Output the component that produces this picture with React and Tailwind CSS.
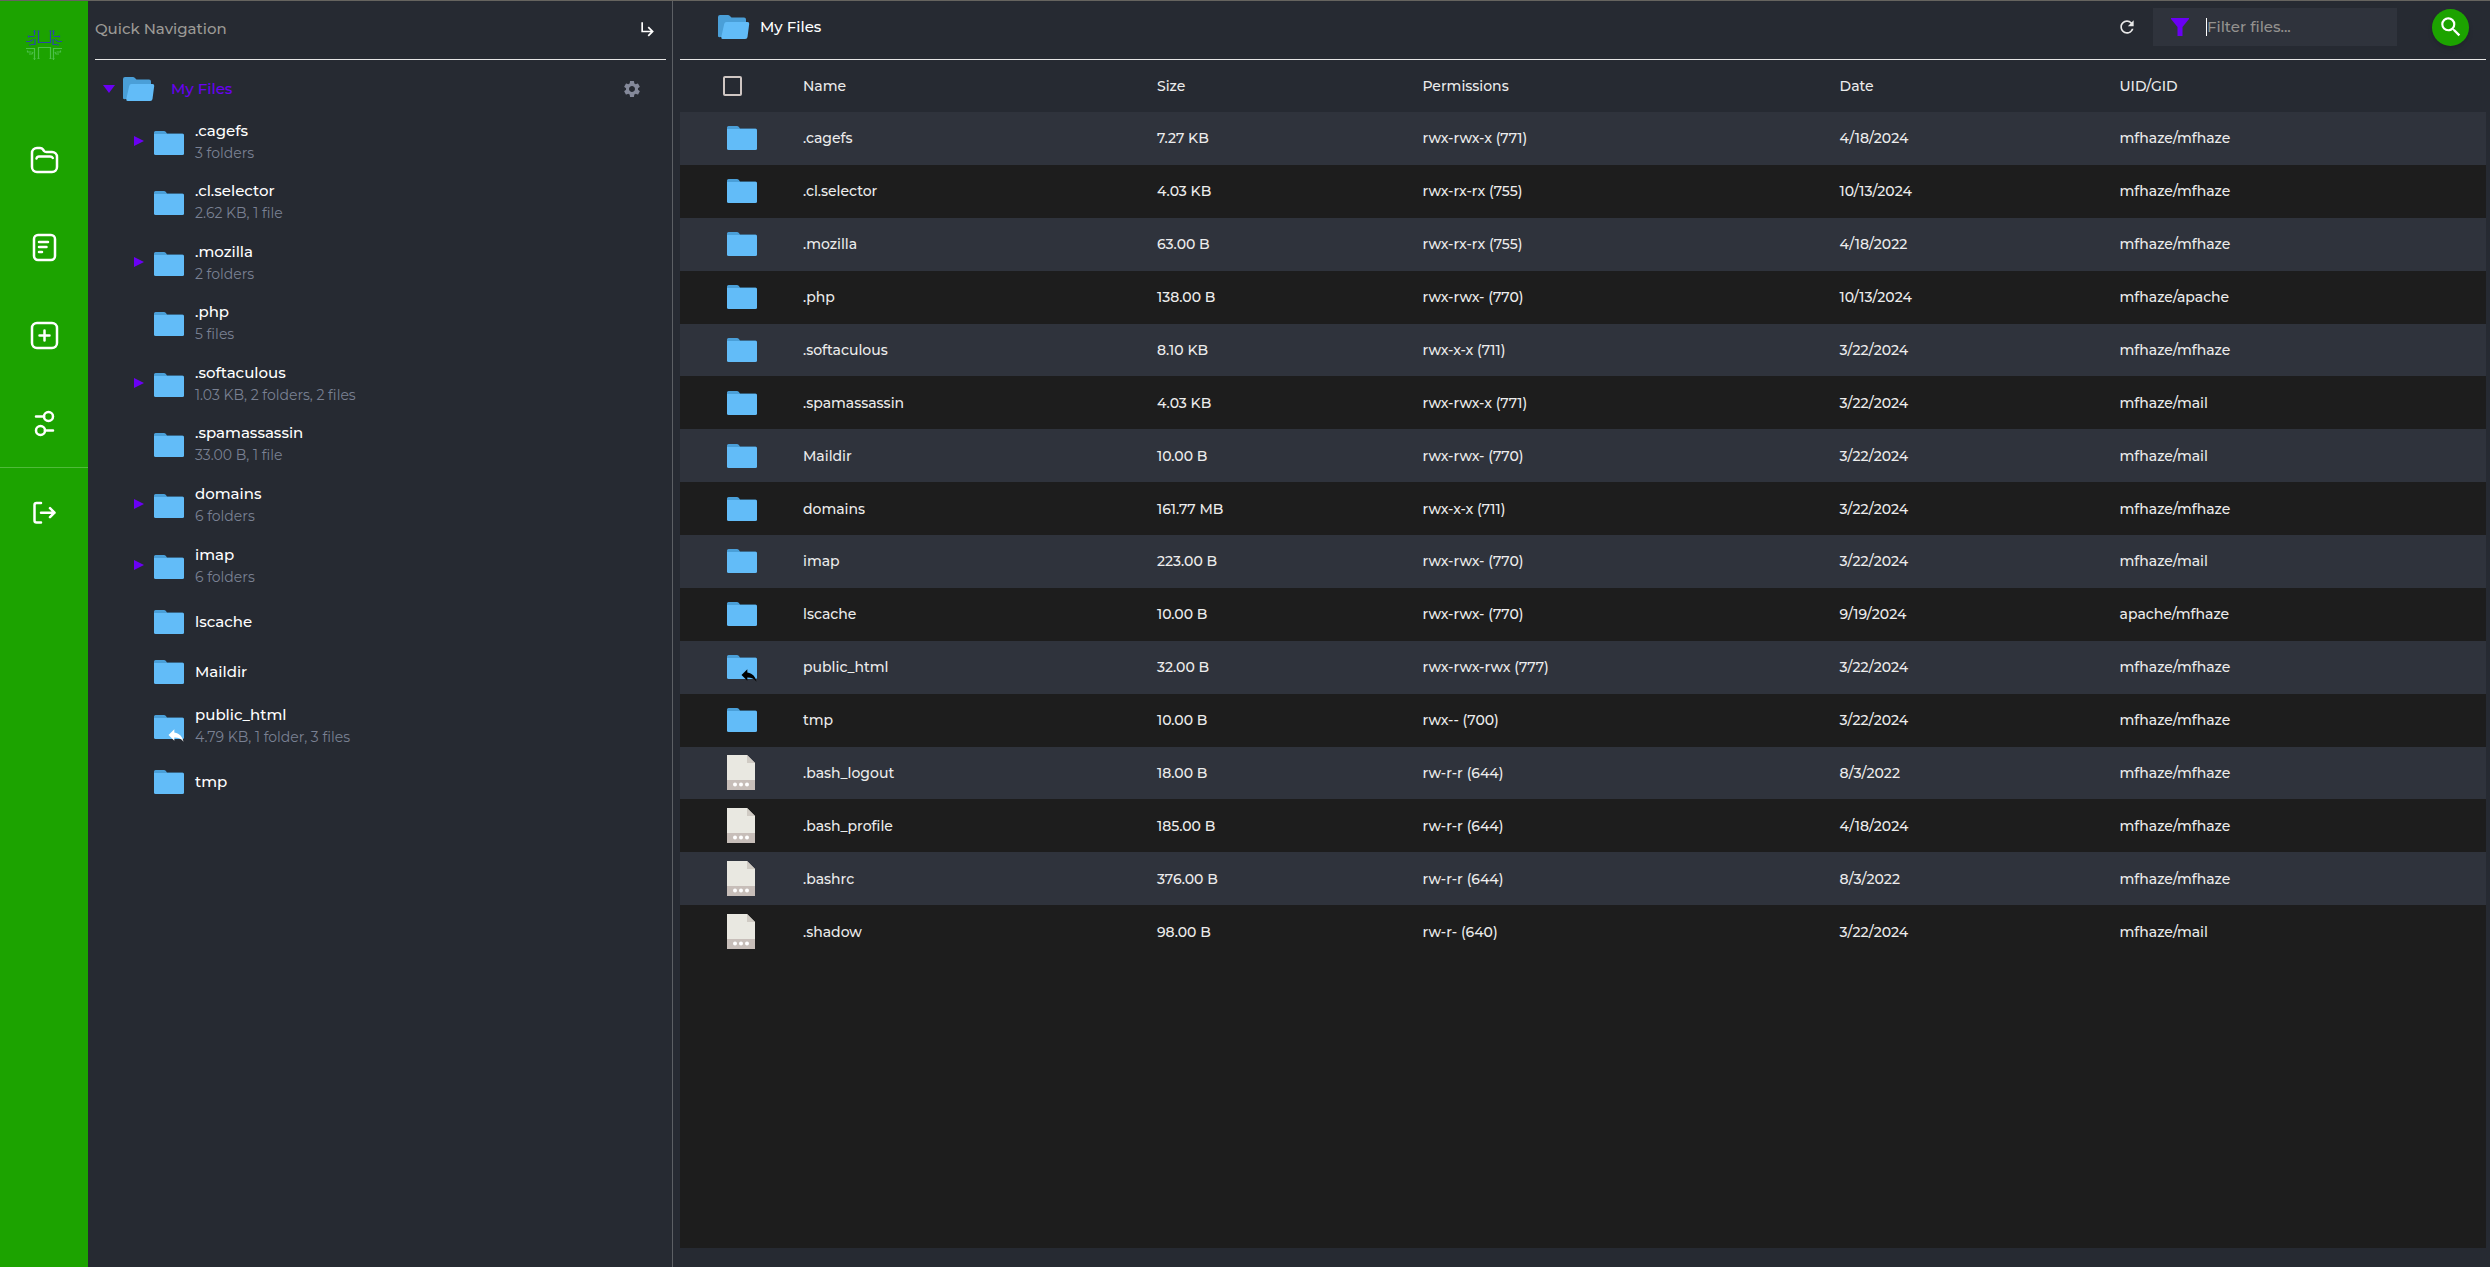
import React, { useState } from 'react';
import { MdSettings, MdSubdirectoryArrowRight, MdRefresh, MdSearch, MdReply } from 'react-icons/md';

const tree = [
  { name: '.cagefs', info: '3 folders', expandable: true },
  { name: '.cl.selector', info: '2.62 KB, 1 file' },
  { name: '.mozilla', info: '2 folders', expandable: true },
  { name: '.php', info: '5 files' },
  { name: '.softaculous', info: '1.03 KB, 2 folders, 2 files', expandable: true },
  { name: '.spamassassin', info: '33.00 B, 1 file' },
  { name: 'domains', info: '6 folders', expandable: true },
  { name: 'imap', info: '6 folders', expandable: true },
  { name: 'lscache' },
  { name: 'Maildir' },
  { name: 'public_html', info: '4.79 KB, 1 folder, 3 files', link: true },
  { name: 'tmp' },
];

const files = [
  ['.cagefs', '7.27 KB', 'rwx-rwx-x (771)', '4/18/2024', 'mfhaze/mfhaze', 'folder'],
  ['.cl.selector', '4.03 KB', 'rwx-rx-rx (755)', '10/13/2024', 'mfhaze/mfhaze', 'folder'],
  ['.mozilla', '63.00 B', 'rwx-rx-rx (755)', '4/18/2022', 'mfhaze/mfhaze', 'folder'],
  ['.php', '138.00 B', 'rwx-rwx- (770)', '10/13/2024', 'mfhaze/apache', 'folder'],
  ['.softaculous', '8.10 KB', 'rwx-x-x (711)', '3/22/2024', 'mfhaze/mfhaze', 'folder'],
  ['.spamassassin', '4.03 KB', 'rwx-rwx-x (771)', '3/22/2024', 'mfhaze/mail', 'folder'],
  ['Maildir', '10.00 B', 'rwx-rwx- (770)', '3/22/2024', 'mfhaze/mail', 'folder'],
  ['domains', '161.77 MB', 'rwx-x-x (711)', '3/22/2024', 'mfhaze/mfhaze', 'folder'],
  ['imap', '223.00 B', 'rwx-rwx- (770)', '3/22/2024', 'mfhaze/mail', 'folder'],
  ['lscache', '10.00 B', 'rwx-rwx- (770)', '9/19/2024', 'apache/mfhaze', 'folder'],
  ['public_html', '32.00 B', 'rwx-rwx-rwx (777)', '3/22/2024', 'mfhaze/mfhaze', 'link'],
  ['tmp', '10.00 B', 'rwx-- (700)', '3/22/2024', 'mfhaze/mfhaze', 'folder'],
  ['.bash_logout', '18.00 B', 'rw-r-r (644)', '8/3/2022', 'mfhaze/mfhaze', 'file'],
  ['.bash_profile', '185.00 B', 'rw-r-r (644)', '4/18/2024', 'mfhaze/mfhaze', 'file'],
  ['.bashrc', '376.00 B', 'rw-r-r (644)', '8/3/2022', 'mfhaze/mfhaze', 'file'],
  ['.shadow', '98.00 B', 'rw-r- (640)', '3/22/2024', 'mfhaze/mail', 'file'],
];

const Logo = () => (
  <svg width="36" height="30" viewBox="0 0 36 30" fill="none" strokeWidth="1.2" aria-hidden="true">
    <g stroke="#2a46a8">
      <path d="M12.5 1v11.5h12V1M11.5 1h2M23.5 1h2" />
      <path d="M8.5 0v5M7.5 1.5h2M8.5 6.5H3M9 9v5.5H5M0 11.5h4l3-2M2.5 5.5v2M3 15h2" />
      <path d="M27.5 0v5M26.5 1.5h2M27.5 6.5H33M27 9v5.5h4M36 11.5h-4l-3-2M33.5 5.5v2M33 15h-2" />
    </g>
    <g stroke="#4cc04a">
      <path d="M12.5 29V17.5h12V29M11.5 28.5h2M23.5 28.5h2" />
      <path d="M0 18.5h8.5V30M1.5 20.5v1.5h4M3 24h3l1-2M7.5 28.5h2" />
      <path d="M36 18.5h-8.5V30M34.5 20.5v1.5h-4M33 24h-3l-1-2M26.5 28.5h2" />
    </g>
  </svg>
);

const Folder = () => (
  <svg width="30" height="24" viewBox="0 0 30 24" className="block" aria-hidden="true">
    <path d="M0 1.500a1.500 1.500 0 0 1 1.500-1.500h8.500q1 0 1.700.8L13 2.500h15.500a1.500 1.500 0 0 1 1.500 1.500V10H0z" fill="#4a9fd8" />
    <path d="M0 3h28.500a1.500 1.500 0 0 1 1.500 1.500V22.500a1.500 1.500 0 0 1-1.500 1.500H1.500a1.500 1.500 0 0 1-1.500-1.500z" fill="#62bcf8" />
  </svg>
);

const OpenFolder = () => (
  <svg width="32" height="24" viewBox="0 0 32 24" className="block shrink-0" aria-hidden="true">
    <path d="M0 2a2 2 0 0 1 2-2h8q1 0 1.700.8L13.500 2.500H26a2 2 0 0 1 2 2V22H2.500A2.500 2.500 0 0 1 0 21.500z" fill="#4a9fd8" />
    <path d="M6.200 9Q6.500 7 8.500 7H29.500Q31.500 7 31.200 9L29.500 22Q29.200 24 27.200 24H4.500Q3 24 3.300 22z" fill="#62bcf8" />
  </svg>
);

const FileIcon = () => (
  <svg width="28" height="35" viewBox="0 0 28 35" className="block" aria-hidden="true">
    <path d="M0 0h20l8 8v27H0z" fill="#e9e8e1" />
    <path d="M20 0l8 8h-8z" fill="#d0cbc4" />
    <path d="M0 25h28v10H0z" fill="#c7beb9" />
    <g fill="#fff">
      <circle cx="8" cy="29.5" r="2" />
      <circle cx="14" cy="29.5" r="2" />
      <circle cx="20" cy="29.5" r="2" />
    </g>
  </svg>
);

const FolderIcon = ({ link, arrowClass }) => (
  <span className="relative block h-6 w-[30px] shrink-0">
    <Folder />
    {link && <MdReply className={`absolute -right-0.5 -bottom-1.5 h-5 w-5 ${arrowClass}`} />}
  </span>
);

const railIcons = [
  {
    label: 'Files',
    icon: (
      <>
        <path d="M2 8a5 5 0 0 1 5-5h3q2 0 3 1.500L14 6q.8 1 2.500 1H22a5 5 0 0 1 5 5v10a5 5 0 0 1-5 5H7a5 5 0 0 1-5-5z" />
        <path d="M6.500 13.500Q7 11.500 9 11.500h11q2 0 2.800 1.500" />
      </>
    ),
  },
  {
    label: 'Editor',
    icon: (
      <>
        <rect x="4" y="2" width="21" height="25" rx="4" />
        <path d="M9 9h9M9 14h7.500M9 19h3" />
      </>
    ),
  },
  {
    label: 'Create',
    icon: (
      <>
        <rect x="2" y="2" width="25" height="25" rx="5" />
        <path d="M14.500 9.500v10M9.500 14.500h10" />
      </>
    ),
  },
  {
    label: 'Settings',
    icon: (
      <>
        <circle cx="18.500" cy="7.500" r="4.500" />
        <circle cx="10.500" cy="21.500" r="4.500" />
        <path d="M6 7.500h8M15 21.500h8" />
      </>
    ),
  },
];

const RailButton = ({ label, children }) => (
  <button type="button" aria-label={label} className="flex h-22 w-full items-center justify-center text-white">
    <svg width="29" height="29" viewBox="0 0 29 29" fill="none" stroke="currentColor" strokeWidth="2.5" strokeLinecap="round" strokeLinejoin="round">
      {children}
    </svg>
  </button>
);

const Rail = () => (
  <nav className="flex w-22 shrink-0 flex-col items-center bg-[#1ca300]">
    <div className="mb-[43px] flex h-[71px] items-end pb-3">
      <Logo />
    </div>
    {railIcons.map((item) => (
      <RailButton key={item.label} label={item.label}>{item.icon}</RailButton>
    ))}
    <div className="w-full border-t border-[#4fbb3a]">
      <RailButton label="Log out">
        <path d="M11 5H6.500Q4.500 5 4.500 7v15.500q0 2 2 2H11" />
        <path d="M11 14.700h13.500M20 10.200l4.500 4.500-4.500 4.500" />
      </RailButton>
    </div>
  </nav>
);

const QuickNav = () => (
  <aside className="flex w-[585px] shrink-0 flex-col border-r border-[#5c5f64] pr-1.5 pl-[7px]">
    <header className="flex h-[59px] items-center justify-between border-b border-[#e6e6e6] pr-2 pb-0.5">
      <h2 className="text-[15px] font-medium text-[#9c9a96]">Quick Navigation</h2>
      <button type="button" aria-label="Collapse panel" className="text-white">
        <MdSubdirectoryArrowRight className="h-5 w-5" />
      </button>
    </header>
    <div className="flex h-13 items-center pt-1.5 pr-6 pl-2">
      <svg width="12" height="8" viewBox="0 0 12 8" className="mr-2 shrink-0" aria-hidden="true">
        <path d="M0 0h12L6 8z" fill="#6a00f4" />
      </svg>
      <OpenFolder />
      <a href="#my-files" className="ml-4 grow text-[15px] font-medium text-[#6a00f4]">My Files</a>
      <button type="button" aria-label="Tree settings" className="text-[#84899a]">
        <MdSettings className="h-5 w-5" />
      </button>
    </div>
    <ul>
      {tree.map((item) => (
        <li
          key={item.name}
          className={`flex items-center pl-[39px] ${item.expandable ? 'h-[61px]' : item.info ? 'h-15' : 'h-[50px]'}`}
        >
          <span className="w-5 pb-1">
            {item.expandable && (
              <svg width="10" height="10" viewBox="0 0 10 10" aria-hidden="true">
                <path d="M0 0l10 5-10 5z" fill="#6a00f4" />
              </svg>
            )}
          </span>
          <FolderIcon link={item.link} arrowClass="text-white" />
          <a href={`#${item.name}`} className="ml-[11px] block">
            <span className="block text-[15px] leading-5 font-medium text-white">{item.name}</span>
            {item.info && <span className="block text-sm leading-6 text-[#7a8193]">{item.info}</span>}
          </a>
        </li>
      ))}
    </ul>
  </aside>
);

const Toolbar = () => {
  const [filter, setFilter] = useState('');

  return (
    <header className="flex h-[59px] items-center border-b border-[#e6e6e6] pr-[17px] pb-1.5 pl-[38px]">
      <OpenFolder />
      <h1 className="ml-2.5 grow text-[15px] font-medium text-white">My Files</h1>
      <button type="button" aria-label="Refresh" className="mr-4 text-[#e8e8e8]">
        <MdRefresh className="h-5 w-5" />
      </button>
      <label className="mr-[35px] flex h-[38px] w-[244px] items-center bg-[#2f333c] pl-[18px]">
        <svg width="18" height="18" viewBox="0 0 18 18" className="shrink-0" aria-hidden="true">
          <path d="M0 0h18v1l-6.500 8v9h-5V9L0 1z" fill="#6a00f4" />
        </svg>
        {/* static caret while the box is empty */}
        <span className={`ml-[17px] h-[18px] w-px shrink-0 ${filter ? 'bg-transparent' : 'bg-white'}`} />
        <input
          type="text"
          aria-label="Filter files"
          placeholder="Filter files..."
          value={filter}
          onChange={(e) => setFilter(e.target.value)}
          className={`w-full min-w-0 bg-transparent text-[15px] font-medium text-white outline-none placeholder:text-[#94928f] ${filter ? 'caret-white' : 'caret-transparent'}`}
        />
      </label>
      <button type="button" aria-label="Search" className="flex h-[37px] w-[37px] items-center justify-center rounded-full bg-[#1ca300] text-white shadow-md">
        <MdSearch className="h-[26px] w-[26px]" />
      </button>
    </header>
  );
};

const FileTable = () => (
  <table className="h-[898px] w-full table-fixed border-collapse text-left text-sm font-medium text-[#ececec]">
    <colgroup>
      <col className="w-[123px]" />
      <col className="w-[19.6%]" />
      <col className="w-[14.7%]" />
      <col className="w-[23.1%]" />
      <col className="w-[15.5%]" />
      <col />
    </colgroup>
    <thead>
      <tr className="h-[52px] bg-[#262a32]">
        <th className="pl-[43px]">
          <input
            type="checkbox"
            aria-label="Select all files"
            className="block h-5 w-[19px] appearance-none rounded-xs border-2 border-[#cfc6c3] checked:bg-[#6a00f4]"
          />
        </th>
        {['Name', 'Size', 'Permissions', 'Date', 'UID/GID'].map((title) => (
          <th key={title} className="font-medium">{title}</th>
        ))}
      </tr>
    </thead>
    <tbody>
      {files.map(([name, size, permissions, date, owner, type]) => (
        <tr key={name} className="h-[52px] odd:bg-[#2f333c]">
          <td className="pl-[47px]">
            {type === 'file' ? <FileIcon /> : <FolderIcon link={type === 'link'} arrowClass="text-black" />}
          </td>
          <td>{name}</td>
          <td>{size}</td>
          <td>{permissions}</td>
          <td>{date}</td>
          <td>{owner}</td>
        </tr>
      ))}
    </tbody>
  </table>
);

export default function App() {
  return (
    <div className="flex min-h-screen border-t border-[#66645f] bg-[#262a32] font-['Montserrat','Inter',sans-serif]">
      <Rail />
      <QuickNav />
      <main className="flex min-w-0 grow flex-col pr-1 pb-[19px] pl-[7px]">
        <Toolbar />
        <div className="grow bg-[#1d1d1d]">
          <FileTable />
        </div>
      </main>
    </div>
  );
}
